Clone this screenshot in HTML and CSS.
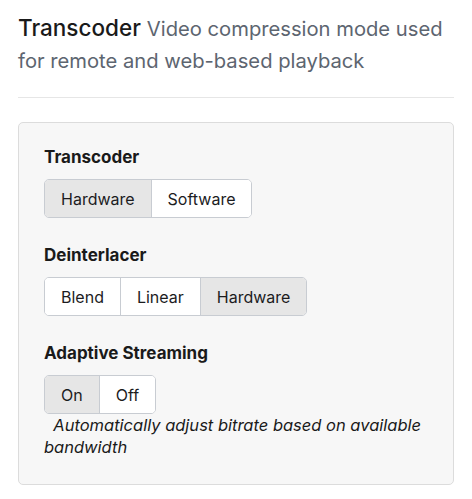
FILE: index.html
```html
<!DOCTYPE html>
<html>
<head>
<meta charset="utf-8">
<link rel="stylesheet" href="styles.css">
</head>
<body>
<div class="page">
  <h2 class="title">Transcoder <span class="desc">Video compression mode used for remote and web-based playback</span></h2>
  <hr class="rule">
  <div class="panel">
    <div class="field">
      <div class="label">Transcoder</div>
      <div class="group">
        <button class="btn active">Hardware</button><button class="btn">Software</button>
      </div>
    </div>
    <div class="field">
      <div class="label">Deinterlacer</div>
      <div class="group">
        <button class="btn">Blend</button><button class="btn">Linear</button><button class="btn active">Hardware</button>
      </div>
    </div>
    <div class="field last">
      <div class="label">Adaptive Streaming</div>
      <div class="group">
        <button class="btn active">On</button><button class="btn">Off</button>
      </div>
      <p class="help">&nbsp;&nbsp;Automatically adjust bitrate based on available bandwidth</p>
    </div>
  </div>
</div>
</body>
</html>
```

FILE: styles.css
```css
* { box-sizing: border-box; }
html, body { margin: 0; padding: 0; background: #fff; }
body { font-family: Inter, "Noto Sans", sans-serif; color: #1c1c1e; }
.page { padding: 12px 18px 0 18px; width: 472px; }
.title { margin: 0; font-size: 22.5px; font-weight: 500; line-height: 32px; color: #1a1a1a; }
.desc { font-size: 20.2px; font-weight: 400; line-height: 1; color: #5d6570; }
.rule { border: 0; border-top: 1px solid #e6e6e6; margin: 21px 0 24px 0; }
.panel { background: #f7f7f7; border: 1px solid #dcdcdc; border-radius: 5px; padding: 24px 25px 26px 25px; }
.field { margin-bottom: 27px; }
.field.last { margin-bottom: 0; }
.label { font-size: 17px; font-weight: 700; line-height: 20px; margin-bottom: 12px; color: #1a1a1a; }
.group { display: flex; width: max-content; border: 1px solid #c8ccd2; border-radius: 5px; overflow: hidden; background: #fff; }
.btn { font-family: inherit; font-size: 16px; color: #1c1c1e; background: #fff; border: 0; border-left: 1px solid #c8ccd2; height: 37px; padding: 0 16px; margin: 0; }
.btn:first-child { border-left: 0; }
.btn.active { background: #e6e6e6; }
.help { margin: 0; font-size: 16.5px; font-style: italic; line-height: 22px; color: #1a1a1a; }
```
